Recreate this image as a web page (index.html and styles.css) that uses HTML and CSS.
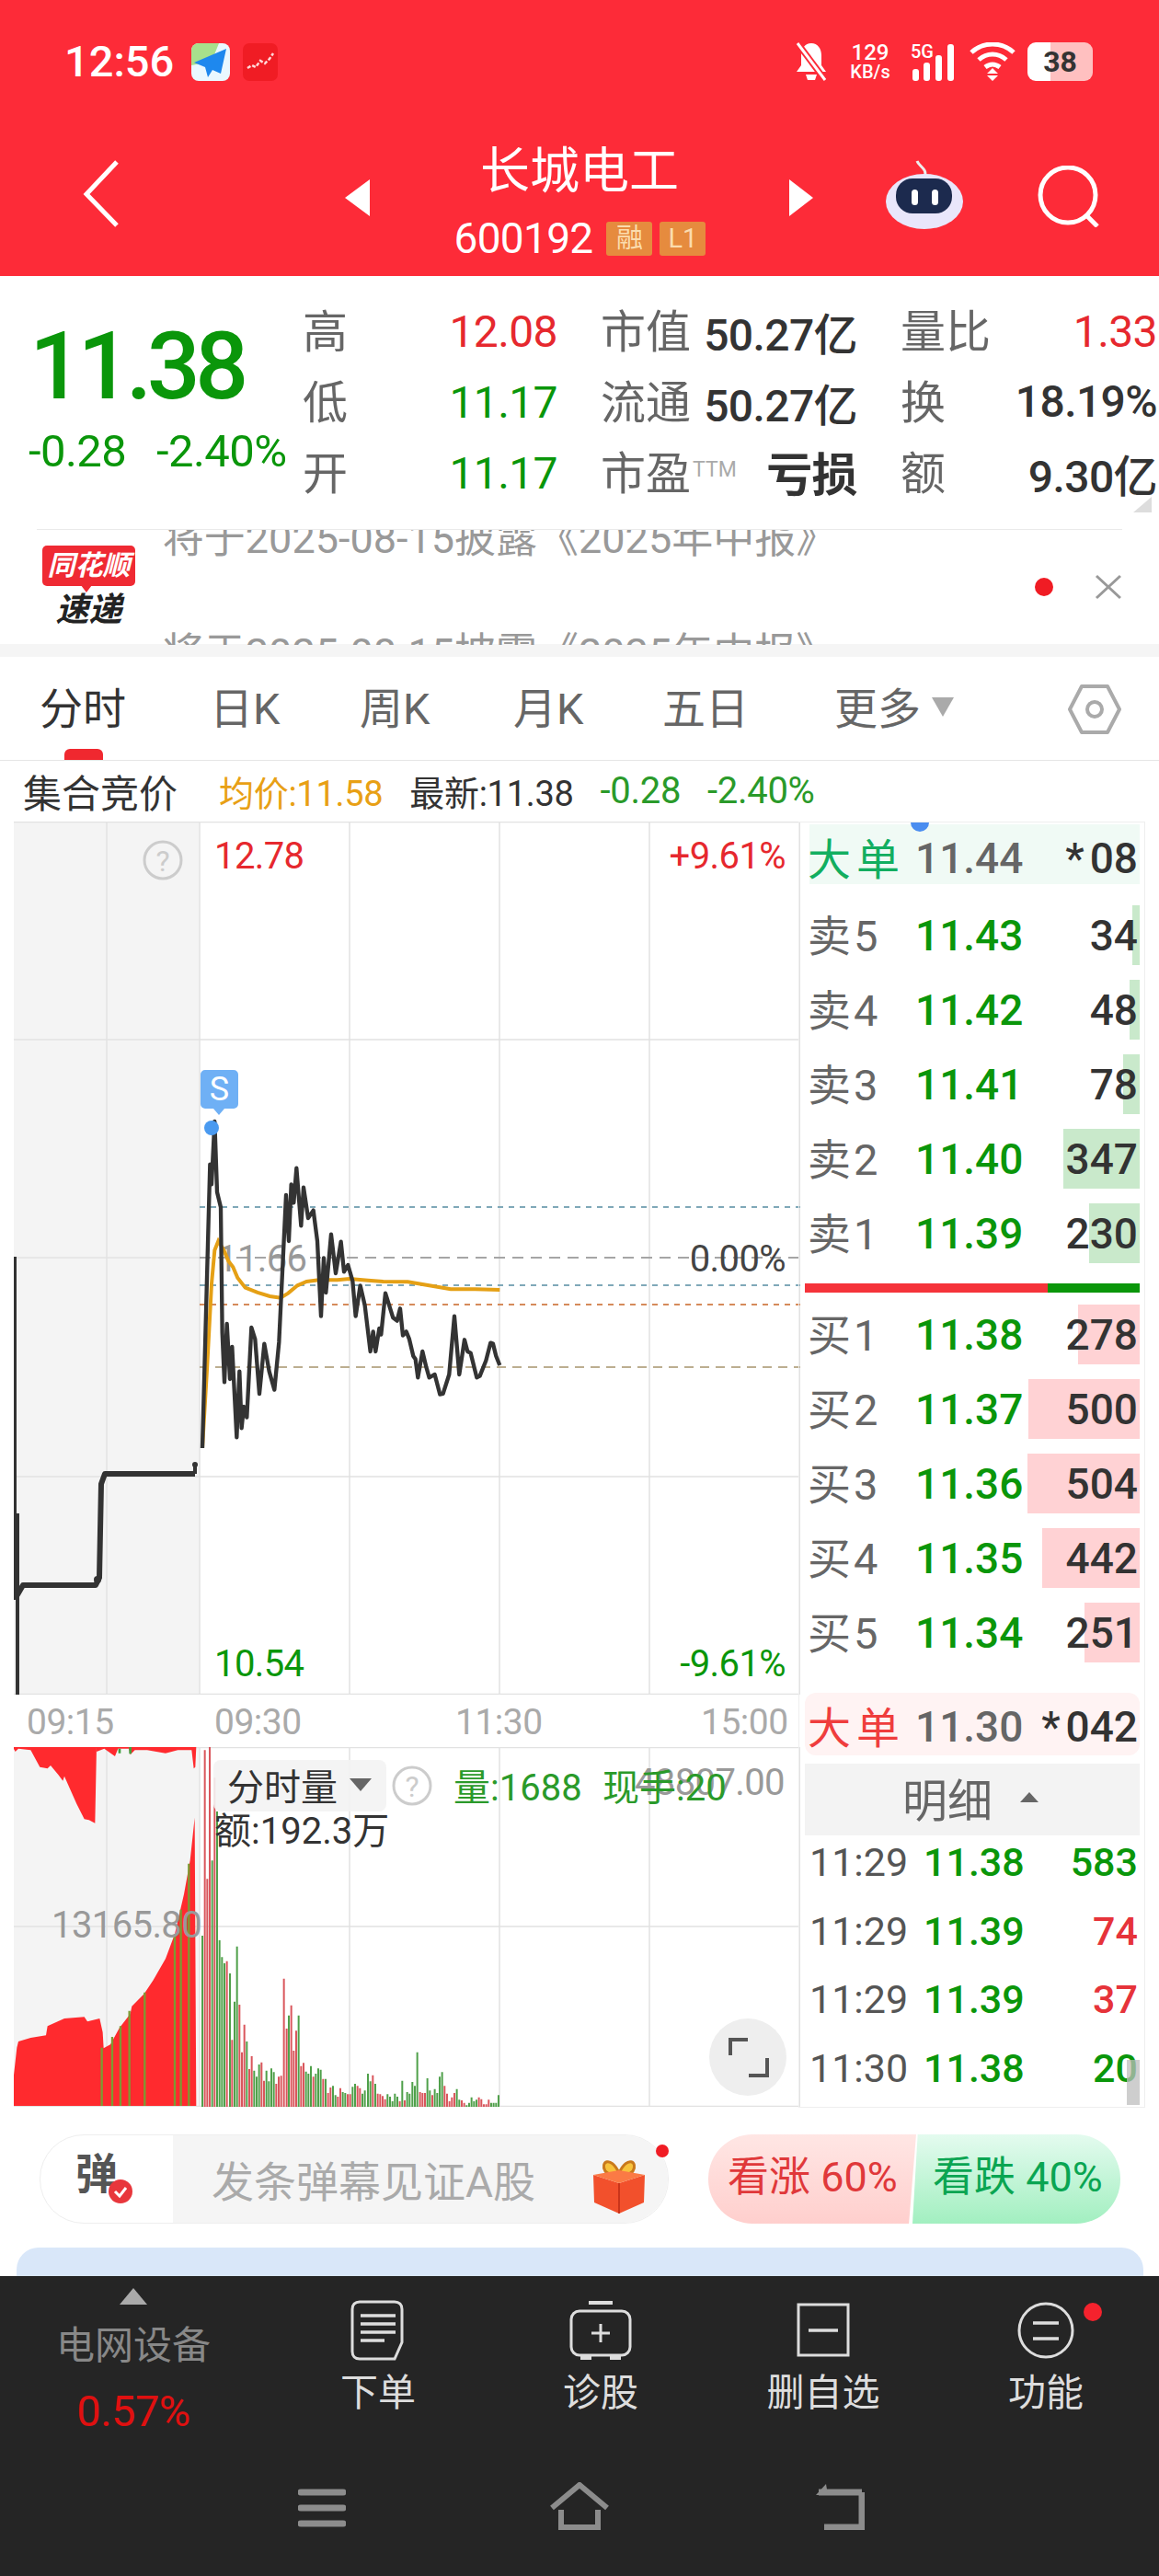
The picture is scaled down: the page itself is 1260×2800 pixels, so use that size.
FILE: index.html
```html
<!DOCTYPE html>
<html>
<head>
<meta charset="utf-8">
<title>长城电工</title>
<link rel="stylesheet" href="styles.css">
</head>
<body>
<div class="page">

<!-- red head: status bar + title -->
<header class="head">
	<div class="status">
		<span class="clock">12:56</span>
		<svg class="app-icon" width="42" height="41" viewBox="0 0 42 41"><rect width="42" height="41" rx="8" fill="#eaf8ff"/><path d="M0 8a8 8 0 0 1 8-8h22l-8 20L0 24z" fill="#a8e08c"/><path d="M38 6L3 21l12 5 3 11 5-8 9 4z" fill="#1e88ee"/></svg>
		<svg class="app-icon second" width="38" height="41" viewBox="0 0 38 41"><rect width="38" height="41" rx="7" fill="#f01c24"/><path d="M5 27l5-3 4 2 5-7 5 3 5-5 4-6" fill="none" stroke="#ffd9d9" stroke-width="2.5" stroke-dasharray="4 2"/></svg>
		<span class="status-gap"></span>
		<svg class="st-bell" width="36" height="42" viewBox="0 0 36 42"><path d="M18 1c-7 0-11 6-11 13v11l-5 7h32l-5-7V14C29 7 25 1 18 1z" fill="#fff"/><path d="M12 35h12l-2 6h-8z" fill="#fff"/><path d="M3 1l30 40" stroke="#fd2b38" stroke-width="7"/><path d="M3 1l30 40" stroke="#fff" stroke-width="3"/></svg>
		<div class="st-speed"><b>129</b><i>KB/s</i></div>
		<svg class="st-signal" width="49" height="42" viewBox="0 0 49 42"><text class="st-5g" x="0" y="17">5G</text><rect x="2" y="29" width="7" height="13" rx="3" fill="#fff"/><rect x="14" y="22" width="7" height="20" rx="3" fill="#fff"/><rect x="27" y="14" width="7" height="28" rx="3" fill="#fff"/><rect x="40" y="2" width="7" height="40" rx="3" fill="#fff"/></svg>
		<svg class="st-wifi" width="52" height="42" viewBox="0 0 52 42"><path d="M3 11C16-1 36-1 49 11M11 19c9-8 21-8 30 0M18 27c5-4 11-4 16 0" fill="none" stroke="#fff" stroke-width="5"/><path d="M26 28l-6 6h12zM20 36h12l-6 6z" fill="#fff"/></svg>
		<div class="st-batt">38</div>
	</div>
	<nav class="title-row">
		<svg class="t-back" width="40" height="73" viewBox="0 0 40 73"><path d="M37 2L4 37l33 34" fill="none" stroke="#fff" stroke-width="5"/></svg>
		<span class="tri-left"></span>
		<div class="title-mid">
			<h1>长城电工</h1>
			<div class="code-line"><span class="code">600192</span><span class="tag">融</span><span class="tag">L1</span></div>
		</div>
		<span class="tri-right"></span>
		<svg class="t-robot" width="84" height="77" viewBox="0 0 84 77"><path d="M42 20C46 12 36 9 34 3" fill="none" stroke="#eee" stroke-width="3"/><ellipse cx="42" cy="47" rx="42" ry="30" fill="#e9e6fb"/><rect x="11" y="22" width="61" height="38" rx="18" fill="#1c2a4e"/><rect x="28" y="34" width="7" height="17" rx="3.5" fill="#fff"/><rect x="50" y="34" width="7" height="17" rx="3.5" fill="#fff"/></svg>
		<svg class="t-search" width="68" height="67" viewBox="0 0 68 67"><circle cx="33" cy="32" r="30" fill="none" stroke="#fff" stroke-width="5"/><path d="M53 54l12 12" stroke="#fff" stroke-width="5"/></svg>
	</nav>
</header>

<!-- quote numbers -->
<section class="quote">
	<div class="price-box">
		<div class="price">11.38</div>
		<div class="change"><span>-0.28</span><span>-2.40%</span></div>
	</div>
	<div class="stat-grid">
		<div class="stat"><span class="lb">高</span><span class="red">12.08</span></div>
		<div class="stat"><span class="lb">市值</span><span class="dk">50.27亿</span></div>
		<div class="stat"><span class="lb">量比</span><span class="red">1.33</span></div>
		<div class="stat"><span class="lb">低</span><span class="grn">11.17</span></div>
		<div class="stat"><span class="lb">流通</span><span class="dk">50.27亿</span></div>
		<div class="stat"><span class="lb">换</span><span class="dk">18.19%</span></div>
		<div class="stat"><span class="lb">开</span><span class="grn">11.17</span></div>
		<div class="stat"><span class="lb">市盈<small>TTM</small></span><span class="dk loss">亏损</span></div>
		<div class="stat"><span class="lb">额</span><span class="dk">9.30亿</span></div>
	</div>
	<span class="corner"></span>
</section>

<!-- news ticker -->
<section class="news">
	<div class="news-logo">
		<span class="logo-top">同花顺</span>
		<span class="logo-bot">速递</span>
	</div>
	<div class="ticker">
		<div class="ticker-in">
			<p>将于2025-08-15披露《2025年中报》</p>
			<p>将于2025-08-15披露《2025年中报》</p>
		</div>
	</div>
	<span class="news-dot"></span>
	<svg class="news-x" width="30" height="28" viewBox="0 0 30 28"><path d="M2 2l26 24M28 2L2 26" stroke="#999" stroke-width="3"/></svg>
</section>
<div class="band"></div>

<!-- period tabs -->
<div class="tabs">
	<span class="tab on">分时</span>
	<span class="tab">日K</span>
	<span class="tab">周K</span>
	<span class="tab">月K</span>
	<span class="tab">五日</span>
	<span class="tab more">更多<i class="more-tri"></i></span>
	<svg class="hex" width="58" height="54" viewBox="0 0 58 54"><path d="M15 2h28l13 25-13 25H15L2 27z" fill="none" stroke="#aaa" stroke-width="4" stroke-linejoin="round"/><circle cx="29" cy="27" r="8" fill="none" stroke="#aaa" stroke-width="4"/></svg>
</div>
<div class="summary">
	<span class="s-name">集合竞价</span>
	<span class="s-avg">均价:11.58</span>
	<span class="s-new">最新:11.38</span>
	<span class="s-grn">-0.28</span>
	<span class="s-grn">-2.40%</span>
</div>

<main class="board">
	<div class="charts">
		<!-- viewBox uses screen coordinates -->
		<svg class="chart price-chart" width="855" height="949" viewBox="15 894 855 949">
			<rect class="shade" x="15" y="894" width="202" height="949"/>
			<path class="grid" d="M15 894.5H870M15 1131H870M15 1368H217M15 1606H870M15 1842.5H870M116 894V1843M217 894V1843M380 894V1843M543 894V1843M706 894V1843M869.5 894V1843"/>
			<path class="dash blue" d="M217 1313H870M217 1398H870"/>
			<path class="dash gray" d="M217 1368H870"/>
			<path class="dash rust" d="M217 1419H870"/>
			<path class="dash tan" d="M217 1487H870"/>
			<circle class="q-ring" cx="177" cy="936" r="20"/>
			<text class="q-mark" x="177" y="948">?</text>
			<text class="ax red-t" x="233" y="945">12.78</text>
			<text class="ax red-t end" x="854" y="945">+9.61%</text>
			<text class="ax grn-t" x="233" y="1823">10.54</text>
			<text class="ax grn-t end" x="854" y="1823">-9.61%</text>
			<text class="ax gray-t" x="236" y="1383">11.66</text>
			<text class="ax dark-t end" x="854" y="1383">0.00%</text>
			<path class="line-thin" d="M16 1367V1736M19 1646V1843"/>
			<path class="line" d="M18 1736L25 1724H104L108 1716 110 1614 114 1603H212"/>
			<path class="line-thin" d="M212 1603V1593"/>
			<circle class="line-dot" cx="16" cy="1736" r="4"/>
			<circle class="line-dot" cx="106" cy="1718" r="4"/>
			<circle class="line-dot" cx="212" cy="1593" r="3"/>
			<g transform="translate(200 1190) scale(.3333)">
				<polyline class="avg" points="60,1155 75,900 90,620 100,510 112,480 130,510 145,545 160,565 175,600 200,632 240,648 280,660 315,665 340,650 370,625 400,612 440,607 500,607 540,603 600,608 650,612 730,613 800,625 870,637 950,637 1030,639"/>
				<polyline class="tick" points="60,1155 85,230 90,295 100,90 108,320 120,370 125,780 132,940 140,750 150,930 157,825 172,1120 181,905 188,1090 195,1020 205,1055 220,762 232,800 246,978 262,815 278,905 295,965 310,810 333,330 342,480 350,295 358,355 367,242 382,430 390,305 405,405 422,380 435,480 447,725 456,535 463,648 480,458 495,585 512,482 522,580 535,558 550,610 560,725 575,625 590,690 608,840 617,775 625,840 637,765 643,785 657,650 682,730 695,740 705,700 714,788 725,775 735,800 748,855 755,865 763,925 778,840 790,890 800,925 818,915 835,980 845,978 865,915 882,725 898,915 915,802 925,840 935,845 955,925 965,920 985,870 1000,812 1008,815 1018,855 1030,885"/>
			</g>
			<circle class="s-dot" cx="230" cy="1227" r="8"/>
			<path class="s-tag" d="M223 1164h31a5 5 0 0 1 5 5v32a5 5 0 0 1-5 5h-10l-6 7-6-7h-9a5 5 0 0 1-5-5v-32a5 5 0 0 1 5-5z"/>
			<text class="s-letter" x="238.5" y="1197">S</text>
		</svg>
		<div class="times">
			<span>09:15</span><span>09:30</span><span>11:30</span><span>15:00</span>
		</div>
		<svg class="chart vol-chart" width="855" height="391" viewBox="15 1900 855 391">
			<rect class="shade" x="15" y="1900" width="202" height="391"/>
			<path class="grid" d="M15 1900.5H870M15 2095H870M15 2290.5H870M116 1900V2291M217 1900V2291M380 1900V2291M543 1900V2291M706 1900V2291M869.5 1900V2291"/>
			<g transform="translate(0 1890) scale(.3333)">
				<path class="area" d="M42 30L50 45 60 35 100 40 130 95 155 100 165 90 190 120 205 140 210 125 230 170 250 215 275 265 290 268 310 278 315 30zM315 30V45L340 35 375 60 385 35 420 35 425 55 440 40 480 40 540 50 580 40 625 40 632 100 637 95 640 30zM42 1200L45 1100 55 1010 60 990 100 978 150 970 155 940 210 915 275 910 285 925 325 915 335 960 338 1012 360 1000 390 945 425 900 430 875 470 835 500 790 540 720 570 640 600 510 620 400 635 260 640 1200z"/>
				<path class="area-grn" d="M332 1200V1010M366 1200V975M393 1200V940M422 1200V890M472 1200V830M570 1200V640M590 1200V560M616 1200V410"/>
				<path class="area-tick" d="M390 35V50M425 30V52"/>
			</g>
			<g transform="translate(200 1890) scale(.3333)">
				<path class="bar-r" d="M68 40V1205M76 460V1205M84 30V1205M100 130V1205M140 728V1205M157 985V1205M181 870V1205M189 1025V1205M197 935V1205M213 1080V1205M221 1038V1205M253 1058V1205M261 1118V1205M301 1128V1205M309 1105V1205M317 1102V1205M326 785V1205M335 948V1205M350 872V1205M358 1020V1205M366 955V1205M382 1070V1205M390 1060V1205M422 1105V1205M454 1112V1205M470 1158V1205M478 1140V1205M502 1170V1205M510 1142V1205M534 1162V1205M542 1162V1205M566 1135V1205M574 1142V1205M616 1100V1205M632 1160V1205M640 1162V1205M648 1168V1205M656 1178V1205M704 1185V1205M720 1182V1205M770 1155V1205M778 1158V1205M786 1158V1205M810 1165V1205M850 1135V1205M858 1160V1205M866 1185V1205M874 1172V1205M882 1158V1205M906 1182V1205M914 1190V1205M962 1172V1205M970 1178V1205M978 1195V1205M986 1195V1205M994 1180V1205"/>
				<path class="bar-g" d="M60 645V1205M92 400V1205M108 240V1205M116 660V1205M124 715V1205M132 735V1205M150 768V1205M165 860V1205M173 680V1205M205 990V1205M229 1085V1205M237 1105V1205M245 1065V1205M269 1085V1205M277 1120V1205M285 1078V1205M293 1090V1205M342 905V1205M374 905V1205M398 1088V1205M406 1095V1205M414 1070V1205M430 1095V1205M438 1078V1205M446 1082V1205M462 1112V1205M486 1135V1205M494 1165V1205M518 1155V1205M526 1158V1205M550 1138V1205M558 1128V1205M582 1160V1205M590 1150V1205M600 1095V1205M608 1120V1205M624 1128V1205M664 1162V1205M672 1170V1205M680 1185V1205M688 1160V1205M696 1170V1205M712 1118V1205M728 1155V1205M736 1160V1205M745 1122V1205M753 1135V1205M761 1025V1205M794 1110V1205M802 1150V1205M818 1145V1205M826 1158V1205M834 1105V1205M842 1090V1205M890 1145V1205M898 1180V1205M922 1198V1205M930 1190V1205M938 1172V1205M946 1185V1205M954 1180V1205M1002 1190V1205M1010 1190V1205M1018 1190V1205M1026 1165V1205"/>
			</g>
			<text class="ax gray-t" x="56" y="2107">13165.80</text>
			<text class="ax gray-t end" x="853" y="1952">48807.00</text>
			<rect class="vol-pick" x="232" y="1914" width="188" height="56" rx="8"/>
			<text class="vol-t" x="247" y="1958">分时量</text>
			<path class="vol-tri" d="M380 1934h24l-12 14z"/>
			<circle class="q-ring" cx="448" cy="1942" r="20"/>
			<text class="q-mark" x="448" y="1954">?</text>
			<text class="vol-t grn-v" x="493" y="1958">量:1688</text>
			<text class="vol-t grn-v" x="655" y="1958">现手:20</text>
			<text class="vol-t" x="233" y="2005">额:192.3万</text>
			<circle class="full-btn" cx="813" cy="2237" r="42"/>
			<path class="full-mark" d="M794 2235v-17h19M834 2238v19h-20"/>
		</svg>
	</div>

	<!-- order book -->
	<aside class="book">
		<span class="book-dot"></span>
		<div class="big big-g"><span class="big-lb">大单</span><span class="big-px">11.44</span><span class="big-q"><em>*</em>08</span></div>
		<div class="rows rows-sell">
			<div class="row"><span class="r-lb">卖5</span><span class="r-px">11.43</span><span class="r-q">34</span><i class="bar bar-sell" style="width:8px"></i></div>
			<div class="row"><span class="r-lb">卖4</span><span class="r-px">11.42</span><span class="r-q">48</span><i class="bar bar-sell" style="width:11px"></i></div>
			<div class="row"><span class="r-lb">卖3</span><span class="r-px">11.41</span><span class="r-q">78</span><i class="bar bar-sell" style="width:18px"></i></div>
			<div class="row"><span class="r-lb">卖2</span><span class="r-px">11.40</span><span class="r-q">347</span><i class="bar bar-sell" style="width:83px"></i></div>
			<div class="row"><span class="r-lb">卖1</span><span class="r-px">11.39</span><span class="r-q">230</span><i class="bar bar-sell" style="width:55px"></i></div>
		</div>
		<div class="split"><i class="split-r"></i><i class="split-g"></i></div>
		<div class="rows rows-buy">
			<div class="row"><span class="r-lb">买1</span><span class="r-px">11.38</span><span class="r-q">278</span><i class="bar bar-buy" style="width:67px"></i></div>
			<div class="row"><span class="r-lb">买2</span><span class="r-px">11.37</span><span class="r-q">500</span><i class="bar bar-buy" style="width:121px"></i></div>
			<div class="row"><span class="r-lb">买3</span><span class="r-px">11.36</span><span class="r-q">504</span><i class="bar bar-buy" style="width:122px"></i></div>
			<div class="row"><span class="r-lb">买4</span><span class="r-px">11.35</span><span class="r-q">442</span><i class="bar bar-buy" style="width:106px"></i></div>
			<div class="row"><span class="r-lb">买5</span><span class="r-px">11.34</span><span class="r-q">251</span><i class="bar bar-buy" style="width:60px"></i></div>
		</div>
		<div class="big big-r"><span class="big-lb">大单</span><span class="big-px">11.30</span><span class="big-q"><em>*</em>042</span></div>
		<div class="detail-head"><span>明细</span><i class="detail-tri"></i></div>
		<div class="trades">
			<div class="trade"><span class="t-time">11:29</span><span class="t-px">11.38</span><span class="t-q t-g">583</span></div>
			<div class="trade"><span class="t-time">11:29</span><span class="t-px">11.39</span><span class="t-q t-r">74</span></div>
			<div class="trade"><span class="t-time">11:29</span><span class="t-px">11.39</span><span class="t-q t-r">37</span></div>
			<div class="trade"><span class="t-time">11:30</span><span class="t-px">11.38</span><span class="t-q t-g">20</span></div>
		</div>
		<i class="thumb"></i>
	</aside>
</main>

<!-- barrage + vote -->
<section class="social">
	<div class="barrage">
		<div class="bar-left"><span class="dan">弹</span><svg class="dan-ok" width="26" height="26" viewBox="0 0 26 26"><circle cx="13" cy="13" r="13" fill="#e8373c"/><path d="M7 13l5 5 7-9" fill="none" stroke="#fff" stroke-width="3"/></svg></div>
		<div class="bar-right">
			<span class="bar-text">发条弹幕见证A股</span>
			<svg class="gift" width="58" height="60" viewBox="0 0 58 60"><path d="M29 16C20-4 8 4 14 14c3 4 10 4 15 2zM29 16C38-4 50 4 44 14c-3 4-10 4-15 2z" fill="#f7c33c" stroke="#c9791c" stroke-width="3"/><path d="M1 18l28 9 28-9-1 30-27 12L2 48z" fill="#f2502c"/><path d="M1 18l28-5 28 5-28 9z" fill="#fb7a45"/><path d="M29 27v33" stroke="#c9341a" stroke-width="2"/></svg>
		</div>
		<span class="bar-dot"></span>
	</div>
	<div class="vote">
		<div class="vote-up">看涨 60%</div>
		<div class="vote-down">看跌 40%</div>
	</div>
</section>
<div class="ad-card"></div>

<!-- bottom dock -->
<footer class="dock">
	<div class="tools">
		<div class="sector">
			<i class="sector-tri"></i>
			<span class="sector-name">电网设备</span>
			<span class="sector-val">0.57%</span>
		</div>
		<div class="tool">
			<svg width="60" height="66" viewBox="0 0 60 66"><path d="M10 2h38c5 0 8 3 8 8v36l-8 18H10c-5 0-8-3-8-8V10c0-5 3-8 8-8z" fill="none" stroke="#ddd" stroke-width="3"/><path d="M11 17h38M11 26h38M11 35h38M11 44h26" stroke="#ddd" stroke-width="3.5"/></svg>
			<span>下单</span>
		</div>
		<div class="tool">
			<svg width="68" height="66" viewBox="0 0 68 66"><path d="M21 3h26" stroke="#ddd" stroke-width="4"/><rect x="2" y="12" width="64" height="48" rx="9" fill="none" stroke="#ddd" stroke-width="3"/><path d="M34 26v20M24 36h20" stroke="#ddd" stroke-width="3"/><path d="M12 63h12M44 63h12" stroke="#ddd" stroke-width="4"/></svg>
			<span>诊股</span>
		</div>
		<div class="tool">
			<svg width="58" height="66" viewBox="0 0 58 66"><rect x="2" y="5" width="54" height="55" fill="none" stroke="#ddd" stroke-width="3"/><path d="M13 33h32" stroke="#ddd" stroke-width="3.5"/></svg>
			<span>删自选</span>
		</div>
		<div class="tool tool-fn">
			<svg width="62" height="66" viewBox="0 0 62 66"><circle cx="31" cy="33" r="29" fill="none" stroke="#ddd" stroke-width="3"/><path d="M17 25h28M17 42h28" stroke="#ddd" stroke-width="3.5"/></svg>
			<span>功能</span>
			<i class="fn-dot"></i>
		</div>
	</div>
	<div class="sysnav">
		<svg width="52" height="44" viewBox="0 0 52 44"><path d="M3 5h46M3 22h46M3 39h46" stroke="#8c8c8c" stroke-width="7" stroke-linecap="round"/></svg>
		<svg width="66" height="52" viewBox="0 0 66 52"><path d="M3 28L33 3l30 25" fill="none" stroke="#8c8c8c" stroke-width="6"/><path d="M13 30v19h40V30" fill="none" stroke="#8c8c8c" stroke-width="6"/></svg>
		<svg width="56" height="52" viewBox="0 0 56 52"><path d="M53 11v38H12" fill="none" stroke="#8c8c8c" stroke-width="7"/><path d="M53 11H6" stroke="#8c8c8c" stroke-width="7"/><path d="M14 2L3 14h13z" fill="#8c8c8c"/></svg>
	</div>
</footer>

</div>
</body>
</html>
```

FILE: styles.css
```css
* {
	box-sizing: border-box;
}
html, body {
	margin: 0;
	padding: 0;
}
body {
	background: #fff;
	font-family: Roboto, "Noto Sans CJK SC", sans-serif;
	color: #333;
}
.page {
	width: 1260px;
	height: 2800px;
	overflow: hidden;
	position: relative;
}

/* head */
.head {
	height: 300px;
	padding-top: 46px;
	background: #fd2b38;
	color: #fff;
}
.status {
	display: flex;
	align-items: center;
	height: 42px;
	padding-left: 70px;
}
.clock {
	font-size: 47px;
	font-weight: 500;
	width: 138px;
	line-height: 42px;
}
.app-icon.second {
	margin-left: 14px;
}
.status-gap {
	width: 562px;
}
.st-speed {
	width: 52px;
	margin-left: 20px;
	text-align: center;
	display: flex;
	flex-direction: column;
}
.st-speed b {
	font-size: 24px;
	line-height: 22px;
	font-weight: 500;
}
.st-speed i {
	font-size: 20px;
	line-height: 20px;
	font-style: normal;
	font-weight: 500;
}
.st-signal {
	margin-left: 18px;
}
.st-5g {
	font-size: 20px;
	font-weight: 500;
	fill: #fff;
}
.st-wifi {
	margin-left: 14px;
}
.st-batt {
	width: 71px;
	height: 42px;
	margin-left: 12px;
	border-radius: 9px;
	background: linear-gradient(90deg, #fff 35%, #ffc0c0 35%);
	color: #333;
	font-size: 32px;
	font-weight: 700;
	line-height: 42px;
	text-align: center;
}
.title-row {
	display: flex;
	align-items: flex-start;
	padding: 0 0 0 90px;
	margin-top: 42px;
	height: 170px;
}
.t-back {
	margin-top: 44px;
	margin-right: 245px;
}
.tri-left, .tri-right {
	width: 0;
	height: 0;
	margin-top: 65px;
	border-top: 20px solid transparent;
	border-bottom: 20px solid transparent;
}
.tri-left {
	border-right: 27px solid #fff;
}
.tri-right {
	border-left: 26px solid #fff;
	margin-right: 79px;
}
.title-mid {
	width: 456px;
	text-align: center;
}
.title-mid h1 {
	margin: 27px 0 0;
	font-size: 54px;
	font-weight: 400;
	line-height: 60px;
}
.code-line {
	display: flex;
	justify-content: center;
	align-items: center;
	gap: 8px;
	margin-top: 22px;
	padding-left: 1px;
}
.code {
	font-size: 46px;
	line-height: 40px;
	letter-spacing: -.7px;
	margin-right: 7px;
}
.tag {
	width: 50px;
	height: 37px;
	border-radius: 3px;
	background: #e68b3e;
	color: #fbdcae;
	font-size: 29px;
	line-height: 37px;
	text-align: center;
}
.t-robot {
	margin-top: 42px;
	margin-right: 81px;
}
.t-search {
	margin-top: 50px;
}

/* quote */
.quote {
	display: flex;
	position: relative;
	height: 275px;
}
.price-box {
	width: 330px;
	padding: 53px 0 0 31px;
}
.price {
	color: #0a960a;
	font-size: 102px;
	font-weight: 500;
	line-height: 90px;
	letter-spacing: -5.5px;
	margin-left: 1px;
}
.change {
	display: flex;
	gap: 33px;
	margin-top: 25px;
	color: #0a960a;
	font-size: 49px;
	line-height: 46px;
	letter-spacing: -.6px;
}
.stat-grid {
	display: grid;
	grid-template-columns: 277px 279px 279px;
	column-gap: 47px;
	grid-auto-rows: 77px;
	padding-top: 22px;
	margin-left: -1px;
}
.stat {
	display: flex;
	justify-content: space-between;
	align-items: center;
	font-size: 48px;
	letter-spacing: -.6px;
}
.lb {
	color: #666;
	font-size: 49px;
	letter-spacing: 0;
	padding-bottom: 8px;
}
.lb small {
	color: #aaa;
	font-size: 23px;
	vertical-align: 14px;
	margin-left: 2px;
}
.red {
	color: #e6282e;
}
.grn {
	color: #0a960a;
}
.dk {
	color: #333;
	font-weight: 500;
	padding-bottom: 2px;
}
.loss {
	font-weight: 700;
	font-size: 50px;
	padding-bottom: 6px;
}
.corner {
	position: absolute;
	left: 1232px;
	top: 240px;
	width: 20px;
	height: 17px;
	background: #ddd;
	clip-path: polygon(100% 0, 100% 100%, 0 100%);
}

/* news */
.news {
	display: flex;
	align-items: center;
	height: 125px;
	margin: 0 40px 0 40px;
	border-top: 1px solid #eaeaea;
}
.news-logo {
	display: flex;
	flex-direction: column;
	align-items: center;
	width: 105px;
	margin: 0 28px 0 4px;
	font-style: italic;
	font-weight: 700;
}
.logo-top {
	position: relative;
	width: 101px;
	height: 44px;
	border-radius: 5px;
	background: #ef2a33;
	color: #fff;
	font-size: 30px;
	line-height: 44px;
	text-align: center;
}
.logo-top::after {
	content: "";
	position: absolute;
	left: 42px;
	bottom: -7px;
	width: 12px;
	height: 8px;
	background: #ef2a33;
	clip-path: polygon(0 0, 100% 0, 50% 100%);
}
.logo-bot {
	color: #222;
	font-size: 36px;
	line-height: 40px;
	margin-top: 6px;
}
.ticker {
	width: 950px;
	height: 125px;
	overflow: hidden;
}
.ticker-in {
	margin-top: -53px;
}
.ticker-in p {
	margin: 0;
	color: #999;
	font-size: 45px;
	line-height: 125px;
	white-space: nowrap;
}
.news-dot {
	width: 20px;
	height: 20px;
	border-radius: 50%;
	background: #f01c24;
}
.news-x {
	margin-left: 45px;
}
.band {
	height: 14px;
	background: #f5f5f5;
}

/* tabs */
.tabs {
	display: grid;
	grid-template-columns: 185px 163px 167px 162px 187px 254px 58px;
	align-items: center;
	position: relative;
	height: 113px;
	padding: 0 0 0 43px;
	border-bottom: 1px solid #e6e6e6;
	font-size: 47px;
	color: #666;
	line-height: 113px;
}
.tab.on {
	color: #333;
}
.tab.on::after {
	content: "";
	position: absolute;
	left: 70px;
	bottom: 0;
	width: 42px;
	height: 12px;
	border-radius: 6px 6px 0 0;
	background: #f0282f;
}
.more-tri {
	display: inline-block;
	margin-left: 12px;
	width: 0;
	height: 0;
	border-left: 12px solid transparent;
	border-right: 12px solid transparent;
	border-top: 21px solid #aaa;
	vertical-align: 8px;
}
.summary {
	display: flex;
	align-items: center;
	gap: 29px;
	height: 65px;
	padding-left: 25px;
	font-size: 38px;
	letter-spacing: -.3px;
}
.s-name {
	font-size: 42px;
	margin-right: 16px;
	letter-spacing: 0;
}
.s-avg {
	color: #e8a015;
}
.s-new {
	color: #333;
}
.s-grn {
	color: #2a9a2a;
	font-size: 40px;
}

/* charts */
.board {
	display: flex;
	height: 1402px;
	margin-top: 1px;
}
.charts {
	width: 853px;
	margin-left: 15px;
	flex: none;
}
.chart {
	display: block;
}
.shade {
	fill: #f4f4f4;
}
.grid {
	fill: none;
	stroke: #e2e2e2;
	stroke-width: 1.5;
}
.dash {
	fill: none;
	stroke-width: 2;
	stroke-dasharray: 6 6;
}
.blue {
	stroke: #7fa8b8;
}
.gray {
	stroke: #a5a5a5;
	stroke-dasharray: 12 8;
}
.rust {
	stroke: #d58a5a;
}
.tan {
	stroke: #bcae90;
	stroke-dasharray: 10 7;
}
.q-ring {
	fill: none;
	stroke: #ccc;
	stroke-width: 3;
}
.q-mark {
	fill: #ccc;
	font-size: 32px;
	text-anchor: middle;
}
.ax {
	font-size: 40px;
	letter-spacing: -.6px;
}
.end {
	text-anchor: end;
}
.red-t {
	fill: #e6282e;
}
.grn-t {
	fill: #0a960a;
}
.gray-t {
	fill: #999;
	font-size: 40px;
}
.dark-t {
	fill: #444;
}
.line {
	fill: none;
	stroke: #333;
	stroke-width: 6;
	stroke-linejoin: round;
}
.line-thin {
	fill: none;
	stroke: #333;
	stroke-width: 4;
}
.line-dot {
	fill: #333;
}
.avg {
	fill: none;
	stroke: #e5a015;
	stroke-width: 12;
}
.tick {
	fill: none;
	stroke: #333;
	stroke-width: 13;
	stroke-linejoin: round;
}
.s-dot {
	fill: #4a9af0;
}
.s-tag {
	fill: #6fb0f5;
}
.s-letter {
	fill: #fff;
	font-size: 36px;
	text-anchor: middle;
}
.times {
	display: grid;
	grid-template-columns: 204px 265px 264px auto;
	height: 57px;
	line-height: 60px;
	padding-left: 14px;
	font-size: 39px;
	letter-spacing: -.5px;
	color: #aaa;
}
.times span:nth-child(3) {
	margin-left: -3px;
}
.area {
	fill: #ff2a2e;
}
.area-grn {
	fill: none;
	stroke: #7d9a32;
	stroke-width: 7;
}
.area-tick {
	fill: none;
	stroke: #3fa03f;
	stroke-width: 8;
}
.bar-r {
	fill: none;
	stroke: #d9565c;
	stroke-width: 6;
}
.bar-g {
	fill: none;
	stroke: #4fa04a;
	stroke-width: 6;
}
.vol-pick {
	fill: #f3f3f3;
	fill-opacity: .9;
}
.vol-t {
	font-size: 40px;
	fill: #333;
}
.grn-v {
	fill: #2a9a2a;
}
.vol-tri {
	fill: #666;
}
.full-btn {
	fill: #eee;
}
.full-mark {
	fill: none;
	stroke: #555;
	stroke-width: 4;
}

/* order book */
.book {
	position: relative;
	width: 377px;
	height: 1398px;
	flex: none;
	border: 1px solid #eee;
	padding: 2px 5px 0 6px;
}
.book-dot {
	position: absolute;
	left: 121px;
	top: -10px;
	width: 20px;
	height: 20px;
	border-radius: 50%;
	background: #4a8df0;
	clip-path: inset(10px 0 0 0);
	z-index: 2;
}
.big {
	display: grid;
	grid-template-columns: 117px 1fr auto;
	align-items: center;
	margin-left: 5px;
	padding: 0 2px 0 0;
	height: 65px;
	font-size: 46px;
}
.big-g {
	background: #f0faf5;
}
.big-r {
	height: 68px;
	margin-top: 25px;
	margin-left: 0;
	padding-left: 5px;
	border-radius: 12px;
	background: #fff3f3;
}
.big-lb {
	font-size: 47px;
	letter-spacing: 6px;
	padding-bottom: 9px;
	margin-left: -2px;
}
.big-g .big-lb {
	color: #12ae60;
}
.big-r .big-lb {
	color: #ef3d3d;
}
.big-px {
	color: #666;
	font-weight: 500;
	margin-left: -2px;
	padding-bottom: 5px;
}
.big-q {
	font-weight: 500;
	padding-bottom: 5px;
}
.big-q em {
	font-style: normal;
	margin-right: 6px;
}
.rows-sell {
	margin-top: 15px;
}
.rows-buy {
	margin-top: 5px;
}
.row {
	position: relative;
	display: grid;
	grid-template-columns: 117px 1fr auto;
	align-items: center;
	height: 81px;
	padding: 0 2px 0 5px;
	font-size: 46px;
}
.r-lb {
	color: #666;
	font-size: 47px;
	letter-spacing: 3px;
	padding-bottom: 6px;
	margin-left: -2px;
}
.r-px {
	color: #0a960a;
	font-weight: 500;
	margin-left: -2px;
}
.r-q {
	color: #333;
	font-weight: 500;
	position: relative;
	z-index: 1;
}
.bar {
	position: absolute;
	right: 0;
	top: 8px;
	height: 65px;
}
.bar-sell {
	background: #c9e9cb;
}
.bar-buy {
	background: #ffd2d4;
}
.split {
	display: flex;
	height: 10px;
	margin-top: 14px;
}
.split-r {
	width: 264px;
	background: #f5333a;
}
.split-g {
	flex: 1;
	background: #0a960a;
}
.detail-head {
	display: flex;
	align-items: center;
	height: 78px;
	margin-top: 9px;
	padding: 0 0 6px 106px;
	background: #f3f3f3;
	color: #666;
	font-size: 49px;
}
.detail-tri {
	width: 0;
	height: 0;
	margin-left: 30px;
	border-left: 10px solid transparent;
	border-right: 10px solid transparent;
	border-bottom: 11px solid #666;
}
.trades {
	margin-top: -8px;
}
.trade {
	display: grid;
	grid-template-columns: 124px 1fr auto;
	align-items: center;
	height: 74.5px;
	padding: 0 2px 0 5px;
	font-size: 43px;
	font-weight: 500;
}
.t-time {
	color: #555;
	font-weight: 400;
}
.t-px, .t-g {
	color: #0a960a;
}
.t-r {
	color: #e6333a;
}
.thumb {
	position: absolute;
	right: 5px;
	top: 1345px;
	width: 14px;
	height: 49px;
	background: rgba(190, 190, 190, .75);
}

/* barrage and vote */
.social {
	display: flex;
	height: 97px;
	margin-top: 25px;
	padding-left: 43px;
}
.barrage {
	position: relative;
	display: flex;
	width: 684px;
	height: 97px;
	border: 1px solid #eee;
	border-radius: 48px;
	margin-right: 43px;
}
.bar-left {
	position: relative;
	width: 144px;
	flex: none;
}
.dan {
	position: absolute;
	left: 38px;
	top: 14px;
	color: #555;
	font-size: 46px;
	font-weight: 700;
	line-height: 56px;
}
.dan-ok {
	position: absolute;
	left: 74px;
	top: 48px;
}
.bar-right {
	display: flex;
	align-items: center;
	flex: 1;
	border-radius: 0 48px 48px 0;
	background: #f5f5f5;
	padding-left: 42px;
}
.bar-text {
	color: #aaa;
	font-size: 46px;
	width: 414px;
	padding-bottom: 2px;
}
.gift {
	margin-top: 14px;
}
.bar-dot {
	position: absolute;
	right: -1px;
	top: 10px;
	width: 14px;
	height: 14px;
	border-radius: 50%;
	background: #f01c24;
}
.vote {
	display: flex;
	width: 448px;
	height: 97px;
	font-size: 45px;
	line-height: 94px;
}
.vote-up, .vote-down {
	width: 226px;
	flex: none;
}
.vote-up {
	padding-left: 21px;
	border-radius: 48px 0 0 48px;
	background: linear-gradient(#ffe6e4, #ffcfcd);
	color: #e0383a;
	clip-path: polygon(0 0, 100% 0, 96.5% 100%, 0 100%);
}
.vote-down {
	margin-left: -4px;
	padding-left: 22px;
	border-radius: 0 48px 48px 0;
	background: linear-gradient(#e4fbef, #a2efc0);
	color: #0aa552;
	clip-path: polygon(2.5% 0, 100% 0, 100% 100%, 0 100%);
}
.ad-card {
	height: 31px;
	margin: 26px 17px 0 18px;
	border-radius: 24px 24px 0 0;
	background: #d9e7f9;
}

/* dock */
.dock {
	height: 326px;
	background: #252525;
}
.tools {
	display: grid;
	grid-template-columns: 290px repeat(4, 242px);
	height: 224px;
}
.sector {
	display: flex;
	flex-direction: column;
	align-items: center;
	padding-top: 13px;
}
.sector-tri {
	width: 0;
	height: 0;
	border-left: 15px solid transparent;
	border-right: 15px solid transparent;
	border-bottom: 18px solid #aaa;
}
.sector-name {
	margin-top: 15px;
	color: #888;
	font-size: 42px;
	line-height: 60px;
}
.sector-val {
	margin-top: 11px;
	color: #e01010;
	font-size: 47px;
	line-height: 60px;
	letter-spacing: -.5px;
}
.tool {
	position: relative;
	display: flex;
	flex-direction: column;
	align-items: center;
	padding-top: 26px;
	color: #ddd;
	font-size: 41px;
}
.tool span {
	margin-top: 7px;
	line-height: 56px;
}
.fn-dot {
	position: absolute;
	left: 162px;
	top: 29px;
	width: 20px;
	height: 20px;
	border-radius: 50%;
	background: #f5222d;
}
.sysnav {
	display: flex;
	align-items: flex-start;
	gap: 221px;
	padding-left: 324px;
}
.sysnav svg:first-child {
	margin-top: 6px;
}
```
